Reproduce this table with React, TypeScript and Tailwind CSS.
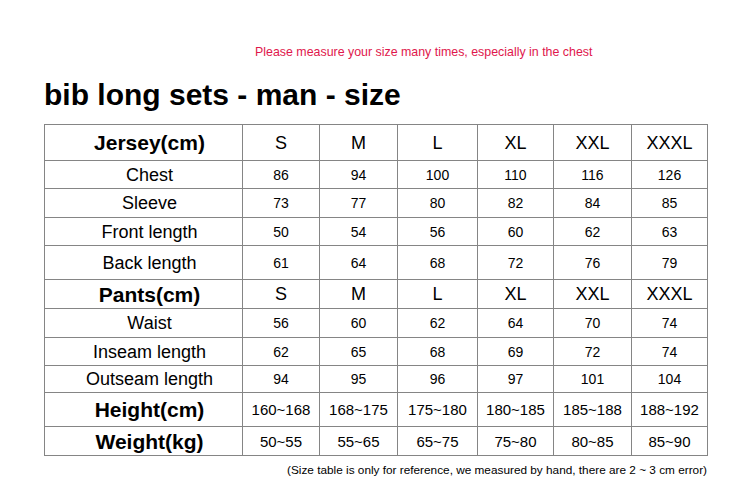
const sizes = ['S', 'M', 'L', 'XL', 'XXL', 'XXXL'];
const colWidths = ['w-[198px]', 'w-[77px]', 'w-[78px]', 'w-[80px]', 'w-[76px]', 'w-[78px]', 'w-[76px]'];

type Row = {
  label: string;
  values: string[];
  h: string;
  kind: 'head' | 'data' | 'range';
};

const rows: Row[] = [
  { label: 'Jersey(cm)', values: sizes, h: 'h-[36px]', kind: 'head' },
  { label: 'Chest', values: ['86', '94', '100', '110', '116', '126'], h: 'h-[28px]', kind: 'data' },
  { label: 'Sleeve', values: ['73', '77', '80', '82', '84', '85'], h: 'h-[29px]', kind: 'data' },
  { label: 'Front length', values: ['50', '54', '56', '60', '62', '63'], h: 'h-[28px]', kind: 'data' },
  { label: 'Back length', values: ['61', '64', '68', '72', '76', '79'], h: 'h-[34px]', kind: 'data' },
  { label: 'Pants(cm)', values: sizes, h: 'h-[29px]', kind: 'head' },
  { label: 'Waist', values: ['56', '60', '62', '64', '70', '74'], h: 'h-[29px]', kind: 'data' },
  { label: 'Inseam length', values: ['62', '65', '68', '69', '72', '74'], h: 'h-[28px]', kind: 'data' },
  { label: 'Outseam length', values: ['94', '95', '96', '97', '101', '104'], h: 'h-[27px]', kind: 'data' },
  { label: 'Height(cm)', values: ['160~168', '168~175', '175~180', '180~185', '185~188', '188~192'], h: 'h-[34px]', kind: 'range' },
  { label: 'Weight(kg)', values: ['50~55', '55~65', '65~75', '75~80', '80~85', '85~90'], h: 'h-[29px]', kind: 'range' },
];

export default function App() {
  return (
    <div className="w-[749px] h-[496px] bg-white text-black font-['Liberation_Sans',Arial,sans-serif] overflow-hidden">
      {/* Note */}
      <p className="pt-[45px] pl-[255px] text-[12.4px] leading-[14px] text-[#e0174c]">
        Please measure your size many times, especially in the chest
      </p>

      {/* Title */}
      <h1 className="mt-[19px] pl-[44px] text-[30px] leading-[34px] font-bold">
        bib long sets - man - size
      </h1>

      {/* Size table */}
      <table className="mt-[12px] ml-[44px] w-[663px] table-fixed border-collapse">
        <colgroup>
          {colWidths.map((w, i) => (
            <col key={i} className={w} />
          ))}
        </colgroup>
        <tbody>
          {rows.map(row => (
            <tr key={row.label} className={row.h}>
              <td
                className={`border border-[#858585] py-0 pr-0 pl-[12px] text-center leading-none ${
                  row.kind === 'data' ? 'text-[18px]' : 'text-[21px] font-bold'
                }`}
              >
                {row.label}
              </td>
              {row.values.map((v, i) => (
                <td
                  key={i}
                  className={`border border-[#858585] p-0 text-center leading-none ${
                    row.kind === 'head' ? 'text-[18px]' : row.kind === 'range' ? 'text-[15px]' : 'text-[14px]'
                  }`}
                >
                  {v}
                </td>
              ))}
            </tr>
          ))}
        </tbody>
      </table>

      {/* Footer note */}
      <p className="mt-[8px] pr-[42px] text-right text-[11.8px] leading-[13px]">
        (Size table is only for reference, we measured by hand, there are 2 ~ 3 cm error)
      </p>
    </div>
  );
}
